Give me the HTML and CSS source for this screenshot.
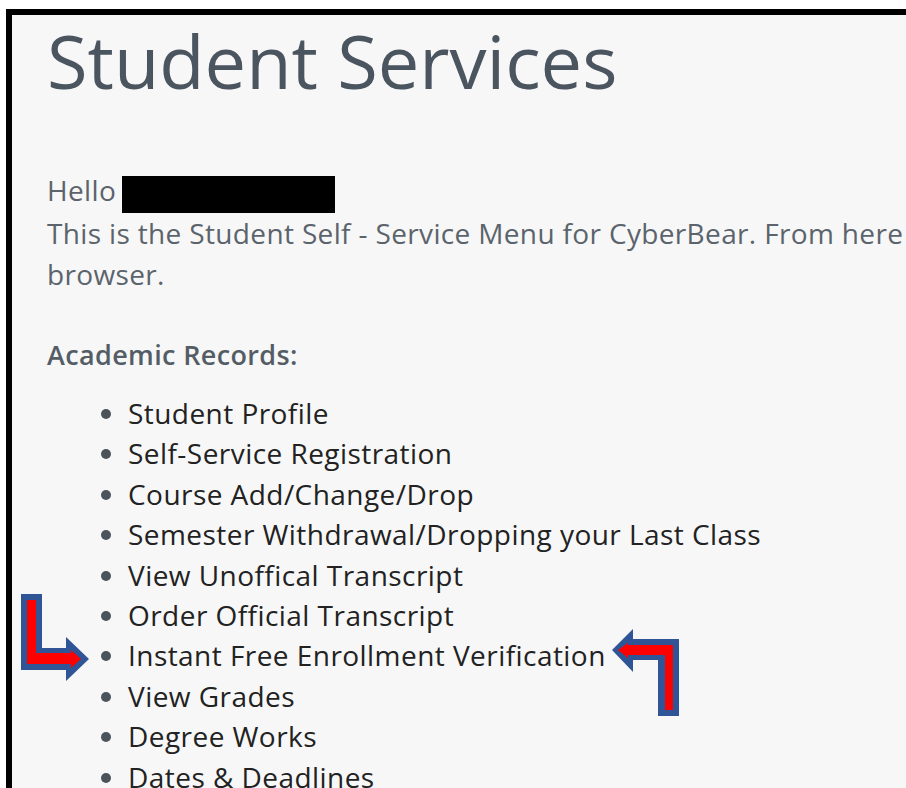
FILE: index.html
```html
<!DOCTYPE html>
<html lang="en">
<head>
<meta charset="utf-8">
<title>Student Services</title>
<link rel="stylesheet" href="styles.css">
</head>
<body>
<div class="frame">
  <main class="content">
    <h1 class="page-title">Student Services</h1>
    <p class="intro">
      Hello <span class="name-mask"></span><br>
      <span class="nowrap">This is the Student Self - Service Menu for CyberBear. From here you can manage your records from any web</span><br>
      browser.
    </p>
    <h2 class="section-title">Academic Records:</h2>
    <ul class="links">
      <li>Student Profile</li>
      <li>Self-Service Registration</li>
      <li>Course Add/Change/Drop</li>
      <li>Semester Withdrawal/Dropping your Last Class</li>
      <li>View Unoffical Transcript</li>
      <li>Order Official Transcript</li>
      <li>Instant Free Enrollment Verification</li>
      <li>View Grades</li>
      <li>Degree Works</li>
      <li>Dates &amp; Deadlines</li>
    </ul>
  </main>
</div>

<!-- callout arrows pointing at the enrollment verification link -->
<svg class="callouts" width="906" height="788" viewBox="0 0 906 788" aria-hidden="true">
  <polygon class="arrow-edge" points="21,594 42,594 42,648 66,648 66,637 89,659 66,681 66,670 21,670"/>
  <polygon class="arrow-fill" points="27,600 36,600 36,653 71,653 71,650 81,659 71,668 71,664 27,664"/>
  <polygon class="arrow-edge" points="612,650 633,629 633,639 679,639 679,716 658,716 658,660 633,660 633,672"/>
  <polygon class="arrow-fill" points="618,650 628,643 628,645 673,645 673,710 665,710 665,655 628,655 628,658"/>
</svg>
</body>
</html>
```

FILE: styles.css
```css
html, body {
  margin: 0;
  padding: 0;
  background: #ffffff;
  overflow: hidden;
  height: 100%;
}

body {
  position: relative;
  font-family: "Open Sans", "Noto Sans", sans-serif;
}

.frame {
  margin: 9px 0 0 6px;
  border-top: 6px solid #000;
  border-left: 6px solid #000;
  background: #f7f7f7;
  min-height: 800px;
}

.content {
  padding: 4px 0 0 35px;
}

.page-title {
  margin: 0;
  font-size: 74px;
  line-height: 84px;
  font-weight: 400;
  color: #4b5560;
}

.intro {
  margin: 67px 0 0;
  font-size: 28px;
  line-height: 40.5px;
  letter-spacing: 0.35px;
  color: #5b646c;
}

.nowrap {
  white-space: nowrap;
}

.name-mask {
  display: inline-block;
  width: 213px;
  height: 37px;
  margin-left: -2px;
  background: #000;
  vertical-align: -12px;
}

.section-title {
  margin: 40.5px 0 0;
  font-size: 27px;
  line-height: 40.5px;
  font-weight: 600;
  letter-spacing: 0.35px;
  color: #545d66;
}

.links {
  margin: 18px 0 0;
  padding: 0 0 0 81px;
  font-size: 28px;
  line-height: 40.4px;
  letter-spacing: 0.45px;
  color: #222;
}

.links li::marker {
  color: #4b535b;
  letter-spacing: 0;
}

.callouts {
  position: absolute;
  left: 0;
  top: 0;
  pointer-events: none;
}

.arrow-edge {
  fill: #2f5597;
}

.arrow-fill {
  fill: #ff0000;
}
```
